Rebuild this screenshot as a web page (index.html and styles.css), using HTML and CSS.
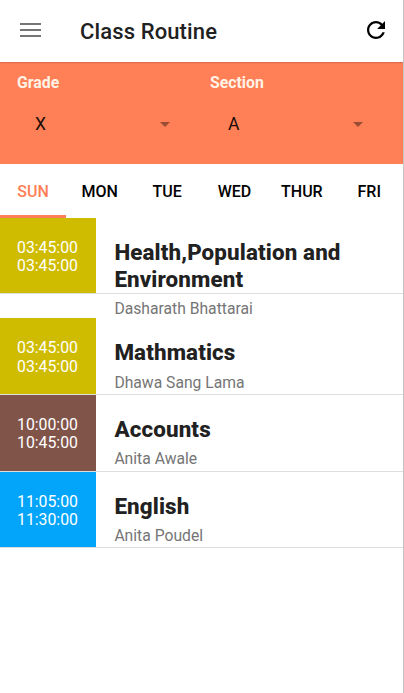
FILE: index.html
```html
<!DOCTYPE html>
<html lang="en">
<head>
    <meta charset="UTF-8">
    <meta name="viewport" content="width=device-width, initial-scale=1.0">
    <title>Class Routine</title>
    <link rel="stylesheet" href="styles.css">
</head>
<body>
    <div class="app">
        <header class="toolbar">
            <svg class="menu-icon" viewBox="0 0 22 16" width="22" height="16">
                <path d="M0 2h21M0 8h21M0 14h21" stroke="#757575" stroke-width="2" fill="none"/>
            </svg>
            <h1>Class Routine</h1>
            <svg class="refresh-icon" viewBox="4 4 16 16" width="18" height="18">
                <path d="M17.65 6.35C16.2 4.9 14.21 4 12 4c-4.42 0-7.99 3.58-7.99 8s3.57 8 7.99 8c3.73 0 6.84-2.55 7.73-6h-2.08c-.82 2.33-3.04 4-5.65 4-3.31 0-6-2.69-6-6s2.69-6 6-6c1.66 0 3.14.69 4.22 1.78L13 11h7V4l-2.35 2.35z"/>
            </svg>
        </header>

        <section class="filters">
            <div class="filter">
                <div class="filter-label">Grade</div>
                <div class="spinner"><span>X</span><i class="caret"></i></div>
            </div>
            <div class="filter">
                <div class="filter-label">Section</div>
                <div class="spinner"><span>A</span><i class="caret"></i></div>
            </div>
        </section>

        <nav class="tabs">
            <div class="tab active">SUN</div>
            <div class="tab">MON</div>
            <div class="tab">TUE</div>
            <div class="tab">WED</div>
            <div class="tab">THUR</div>
            <div class="tab">FRI</div>
        </nav>

        <main class="routine">
            <div class="period olive">
                <div class="time">03:45:00<br>03:45:00</div>
                <div class="details">
                    <h2>Health,Population and Environment</h2>
                    <p>Dasharath Bhattarai</p>
                </div>
            </div>
            <div class="period olive">
                <div class="time">03:45:00<br>03:45:00</div>
                <div class="details">
                    <h2>Mathmatics</h2>
                    <p>Dhawa Sang Lama</p>
                </div>
            </div>
            <div class="period brown">
                <div class="time">10:00:00<br>10:45:00</div>
                <div class="details">
                    <h2>Accounts</h2>
                    <p>Anita Awale</p>
                </div>
            </div>
            <div class="period blue">
                <div class="time">11:05:00<br>11:30:00</div>
                <div class="details">
                    <h2>English</h2>
                    <p>Anita Poudel</p>
                </div>
            </div>
        </main>
    </div>
</body>
</html>
```
FILE: styles.css
```css
:root {
    --primary-color: #ff7f56;
    --text-color: #212121;
    --muted-color: #757575;
    --divider-color: #dedede;
}

* {
    box-sizing: border-box;
}

body {
    margin: 0;
    font-family: Roboto, sans-serif;
    color: var(--text-color);
    background-color: #fff;
}

h1, h2, p {
    margin: 0;
}

.app {
    height: 693px;
    border-right: 1px solid #c4c4c4;
    overflow: hidden;
}

.toolbar {
    position: relative;
    display: flex;
    align-items: center;
    height: 62px;
    padding: 0 18px 2px 20px;
    box-shadow: 0 0 2px rgba(0, 0, 0, 0.4);
    background-color: #fff;
}

.toolbar h1 {
    flex: 1;
    margin-left: 38px;
    padding-top: 2px;
    font-size: 22px;
    font-weight: 500;
    letter-spacing: 0.12px;
}

.filters {
    display: flex;
    height: 102px;
    padding: 11px 0 0 17px;
    background-color: var(--primary-color);
}

.filter {
    width: 193px;
}

.filter-label {
    color: #fff3e6;
    font-size: 15.8px;
    font-weight: 700;
    line-height: 20px;
}

.spinner {
    display: flex;
    align-items: center;
    justify-content: space-between;
    height: 24px;
    margin-top: 19px;
    padding: 0 40px 0 18px;
    font-size: 17.5px;
    color: #1a0d08;
}

.caret {
    border: 5.5px solid transparent;
    border-top-color: #994c34;
    border-bottom: 0;
}

.tabs {
    display: flex;
    height: 54px;
}

.tab {
    width: 67.4px;
    flex-shrink: 0;
    padding-top: 1px;
    border-bottom: 3px solid transparent;
    font-size: 16px;
    font-weight: 500;
    line-height: 53px;
    text-align: center;
    color: #000;
}

.tab.active {
    width: 66px;
    border-color: var(--primary-color);
    color: var(--primary-color);
}

.period {
    position: relative;
    display: flex;
    align-items: flex-start;
    height: 76.6px;
}

.period:first-child {
    height: 100.4px;
}

/* divider stays under the time block even when the title wraps */
.period::after {
    content: "";
    position: absolute;
    top: 75.6px;
    left: 0;
    right: 0;
    height: 1px;
    background-color: var(--divider-color);
}

.period:first-child::after {
    top: 75px;
}

.time {
    width: 96px;
    height: 75.6px;
    padding: 21px 0 0 17px;
    font-size: 15.8px;
    line-height: 18.4px;
    color: #fff;
}

.period:first-child .time {
    height: 75px;
}

.olive .time {
    background-color: #cfbc00;
}

.brown .time {
    background-color: #81544a;
}

.blue .time {
    background-color: #03a5fb;
}

.details {
    flex: 1;
    padding: 21px 40px 0 18.4px;
}

.details h2 {
    font-size: 22.4px;
    font-weight: 800;
    line-height: 26.5px;
    letter-spacing: 0.12px;
}

.details p {
    margin-top: 7px;
    font-size: 15.7px;
    line-height: 20px;
    color: var(--muted-color);
}
```
